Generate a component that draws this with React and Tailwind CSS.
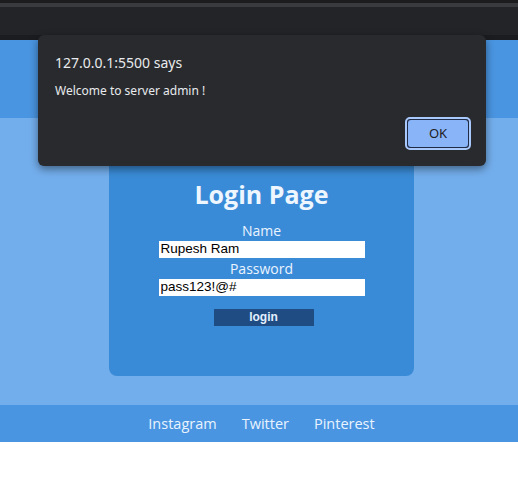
export default function App() {
  const page = { fontFamily: '"Trebuchet MS", "Open Sans", "DejaVu Sans", sans-serif' };
  const field = { fontFamily: '"Liberation Sans", Arial, sans-serif' };

  return (
    <div className="relative min-h-[489px] bg-white" style={page}>
      {/* browser chrome */}
      <div className="h-[3px] bg-[#1c1c1e]" />
      <div className="h-[4px] bg-[#3a3b3e]" />
      <div className="h-[28px] bg-[#232427]" />
      <div className="h-[5px] bg-[#1b1c1f]" />

      <header className="h-[78px] bg-[#4a95e1]" />

      <main className="h-[287px] bg-[#73aeec] flex justify-center pl-[5px]">
        <div className="w-[305px] h-[258px] bg-[#3a8bd7] rounded-b-[8px] flex flex-col items-center pt-[60px]">
          <h1 className="text-[25px] leading-[32px] font-bold text-[#eef6ff]">Login Page</h1>
          <label className="mt-[11px] text-[14px] leading-[20px] text-[#eaf4ff]">Name</label>
          <input
            readOnly
            value="Rupesh Ram"
            className="w-[206px] h-[17px] bg-white text-black text-[13.5px] pl-[2px] outline-none"
            style={field}
          />
          <label className="mt-[1px] text-[14px] leading-[20px] text-[#eaf4ff]">Password</label>
          <input
            readOnly
            value="pass123!@#"
            className="w-[206px] h-[17px] bg-white text-black text-[13.5px] pl-[2px] outline-none"
            style={field}
          />
          <button
            className="mt-[13px] ml-[4px] w-[100px] h-[17px] bg-[#1e4c83] text-[#e4f0ff] text-[12px] font-bold leading-[17px]"
            style={field}
          >
            login
          </button>
        </div>
      </main>

      <footer className="h-[37px] bg-[#4a95e1] flex items-center justify-center gap-[25px] pl-[5px] text-[14.5px] text-[#e8f3ff]">
        <span>Instagram</span>
        <span>Twitter</span>
        <span>Pinterest</span>
      </footer>

      {/* alert dialog */}
      <div
        className="absolute left-[38px] top-[35px] w-[448px] h-[131px] bg-[#292a2d] rounded-[6px] shadow-[0_3px_8px_rgba(0,0,0,0.45)]"
        style={{ fontFamily: '"Noto Sans", "Open Sans", sans-serif' }}
      >
        <div className="pl-[17px] pt-[18px] text-[14px] leading-[20px] text-[#e8eaed]">127.0.0.1:5500 says</div>
        <div className="pl-[17px] pt-[9px] text-[12px] leading-[18px] text-[#e8eaed]">Welcome to server admin !</div>
        <div className="absolute left-[367px] top-[82px] w-[66px] h-[33px] rounded-[5px] border-[2px] border-[#a9c8fb] bg-[#1f2a44] p-[1px]">
          <div className="w-full h-full rounded-[3px] bg-[#8ab4f8] flex items-center justify-center text-[13px] text-[#202124]">
            OK
          </div>
        </div>
      </div>
    </div>
  );
}
